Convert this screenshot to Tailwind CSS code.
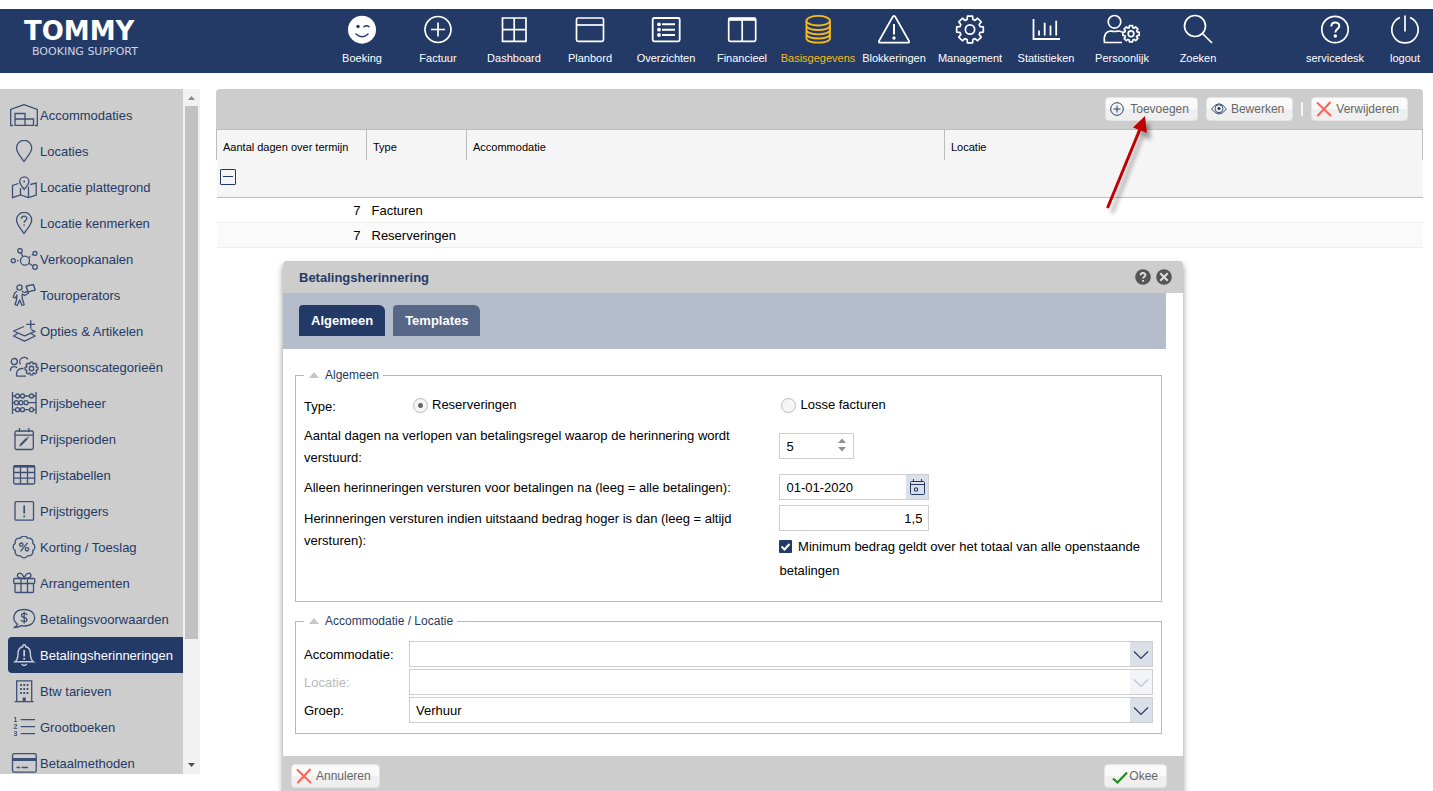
<!DOCTYPE html>
<html lang="nl">
<head>
    <meta charset="UTF-8">
    <meta name="viewport" content="width=device-width, initial-scale=1">
    <title>Tommy Booking Support - Betalingsherinneringen</title>
    <script src="https://cdn.jsdelivr.net/npm/@tailwindcss/browser@4"></script>
</head>
<body class="relative flex h-screen flex-col overflow-hidden bg-white pt-[9px] font-['Liberation_Sans',Arial,sans-serif] text-[13px] text-black">

    <!-- Shared shapes -->
    <svg class="hidden" aria-hidden="true">
        <symbol id="gear" viewBox="-16 -16 32 32">
            <path vector-effect="non-scaling-stroke" stroke-linejoin="round" d="M-2.67-13.74H2.67L2.98-10.38L5.23-9.45L7.83-11.6L11.6-7.83L9.45-5.23L10.38-2.98L13.74-2.67V2.67L10.38 2.98L9.45 5.23L11.6 7.83L7.83 11.6L5.23 9.45L2.98 10.38L2.67 13.74H-2.67L-2.98 10.38L-5.23 9.45L-7.83 11.6L-11.6 7.83L-9.45 5.23L-10.38 2.98L-13.74 2.67V-2.67L-10.38-2.98L-9.45-5.23L-11.6-7.83L-7.83-11.6L-5.23-9.45L-2.98-10.38Z"/>
            <circle vector-effect="non-scaling-stroke" r="4.8"/>
        </symbol>
        <symbol id="cross" viewBox="0 0 16 16">
            <path d="M1.5 2L14.5 14.5M14 1.5L2 14.5" fill="none" stroke="#ff6257" stroke-width="2" stroke-linecap="round"/>
        </symbol>
        <symbol id="chevron" viewBox="0 0 16 10">
            <path d="M1 1.5L8 8.5L15 1.5" fill="none" stroke="currentColor" stroke-width="1.2"/>
        </symbol>
    </svg>

    <!-- Top bar -->
    <header class="flex h-16 shrink-0 bg-[#243a66] text-[11px] text-white">
        <a href="#" class="flex w-[324px] shrink-0 flex-col pt-2 pl-6 font-['DejaVu_Sans',sans-serif]">
            <span class="text-[26px] leading-7 font-bold">TOMMY</span>
            <span class="pl-2 text-[11px] leading-[14px] text-[#cfd6e4]">BOOKING SUPPORT</span>
        </a>
        <nav class="flex">
            <a href="#" class="flex w-[76px] flex-col items-center gap-1 pt-[5px]">
                <svg class="size-8" viewBox="0 0 32 32"><circle cx="16" cy="15.7" r="14" fill="#fff"/><circle cx="12" cy="12.5" r="1.7" fill="#243a66"/><path d="M18 12.7q2.7-2 5 0M10 20q6.200 5.500 12 0" fill="none" stroke="#243a66" stroke-width="1.500" stroke-linecap="round"/></svg>
                <span class="leading-4">Boeking</span>
            </a>
            <a href="#" class="flex w-[76px] flex-col items-center gap-1 pt-[5px]">
                <svg class="size-8" viewBox="0 0 32 32" fill="none" stroke="#fff" stroke-width="1.700"><circle cx="16" cy="15.500" r="13"/><path d="M16 8.500v14M9 15.500h14"/></svg>
                <span class="leading-4">Factuur</span>
            </a>
            <a href="#" class="flex w-[76px] flex-col items-center gap-1 pt-[5px]">
                <svg class="size-8" viewBox="0 0 32 32" fill="none" stroke="#fff" stroke-width="1.700"><path d="M4.500 4h23.500v23.300H4.500zM16.200 4v23.300M4.500 15.700h23.500"/></svg>
                <span class="leading-4">Dashboard</span>
            </a>
            <a href="#" class="flex w-[76px] flex-col items-center gap-1 pt-[5px]">
                <svg class="size-8" viewBox="0 0 32 32" fill="none" stroke="#fff" stroke-width="1.700"><rect x="2.500" y="4" width="27" height="23.300" rx="1.500"/><path d="M2.500 11h27"/></svg>
                <span class="leading-4">Planbord</span>
            </a>
            <a href="#" class="flex w-[76px] flex-col items-center gap-1 pt-[5px]">
                <svg class="size-8" viewBox="0 0 32 32" fill="none" stroke="#fff" stroke-width="1.800"><rect x="2.700" y="4" width="27" height="23.300" rx="1.500"/><path d="M12 10.300h13M12 15.700h13M12 21h13" stroke-width="2"/><g fill="#fff" stroke="none"><circle cx="9" cy="10.300" r="1.900"/><circle cx="9" cy="15.700" r="1.900"/><circle cx="9" cy="21" r="1.900"/></g></svg>
                <span class="leading-4">Overzichten</span>
            </a>
            <a href="#" class="flex w-[76px] flex-col items-center gap-1 pt-[5px]">
                <svg class="size-8" viewBox="0 0 32 32" fill="none" stroke="#fff" stroke-width="1.700"><rect x="2.700" y="4" width="27" height="23.300" rx="1.500"/><path d="M2.700 5.300h27" stroke-width="3"/><path d="M16.200 5v22"/></svg>
                <span class="leading-4">Financieel</span>
            </a>
            <a href="#" aria-current="page" class="flex w-[76px] flex-col items-center gap-1 pt-[5px] text-[#f9b916]">
                <svg class="size-8" viewBox="0 0 32 32" fill="none" stroke="currentColor" stroke-width="1.800"><ellipse cx="16.200" cy="6.700" rx="11.800" ry="4.800"/><path d="M4.400 6.700v17.500c0 6 23.600 6 23.600 0V6.700M4.400 11.500c0 6 23.600 6 23.600 0M4.400 15.800c0 6 23.600 6 23.600 0M4.400 20c0 6 23.600 6 23.600 0"/></svg>
                <span class="leading-4">Basisgegevens</span>
            </a>
            <a href="#" class="flex w-[76px] flex-col items-center gap-1 pt-[5px]">
                <svg class="size-8" viewBox="0 0 32 32" fill="none" stroke="#fff" stroke-width="1.700" stroke-linejoin="round"><path d="M14.900 2.500q1.100-1.200 2.200 0L31 27q.5 1.700-1 1.700H2q-1.500 0-1-1.700z"/><path d="M16 10v10.500" stroke-width="2"/><circle cx="16" cy="24" r=".8" fill="#fff"/></svg>
                <span class="leading-4">Blokkeringen</span>
            </a>
            <a href="#" class="flex w-[76px] flex-col items-center gap-1 pt-[5px]">
                <svg class="size-8" viewBox="0 0 32 32" fill="none" stroke="#fff" stroke-width="1.700"><use href="#gear" x="0.500" y="0" width="31" height="31"/></svg>
                <span class="leading-4">Management</span>
            </a>
            <a href="#" class="flex w-[76px] flex-col items-center gap-1 pt-[5px]">
                <svg class="size-8" viewBox="0 0 32 32" fill="none" stroke="#fff" stroke-width="1.800"><path d="M3.500 5v20h26.500M9 16.500v5M14.700 8.700v12.800M20.500 11.500v10M26.200 6.700v14.800"/></svg>
                <span class="leading-4">Statistieken</span>
            </a>
            <a href="#" class="flex w-[76px] flex-col items-center gap-1 pt-[5px]">
                <svg class="size-8 overflow-visible" viewBox="0 0 32 32" fill="none" stroke="#fff" stroke-width="1.700"><circle cx="8.500" cy="7.800" r="6.300"/><path d="M16 28.500H-1.500q-1.500-11 6.500-11.500 3.500 1 7 0 2.500 0 4 1.200"/><use href="#gear" x="15.500" y="10.300" width="19" height="19"/></svg>
                <span class="leading-4">Persoonlijk</span>
            </a>
            <a href="#" class="flex w-[76px] flex-col items-center gap-1 pt-[5px]">
                <svg class="size-8" viewBox="0 0 32 32" fill="none" stroke="#fff" stroke-width="1.700"><circle cx="13" cy="12" r="10.500"/><path d="M20.500 19.500L30 29"/></svg>
                <span class="leading-4">Zoeken</span>
            </a>
        </nav>
        <div class="ml-auto flex pr-1">
            <a href="#" class="flex w-[92px] flex-col items-center gap-1 pt-[5px]">
                <svg class="size-8" viewBox="0 0 32 32" fill="none" stroke="#fff" stroke-width="1.700"><circle cx="16" cy="15.500" r="13.200"/><path d="M12.300 12.500c0-5.500 8-5.300 8-.5 0 3-4 3.200-4 6.500" stroke-width="2"/><circle cx="16.300" cy="22" r=".9" fill="#fff"/></svg>
                <span class="leading-4">servicedesk</span>
            </a>
            <a href="#" class="flex w-12 flex-col items-center gap-1 pt-[5px]">
                <svg class="size-8" viewBox="0 0 32 32" fill="none" stroke="#fff" stroke-width="1.700"><path d="M11 3.500a13.200 13.200 0 1 0 10 0M16 1.500v16"/></svg>
                <span class="leading-4">logout</span>
            </a>
        </div>
    </header>

    <div class="flex min-h-0 flex-1 pt-4">
        <!-- Side menu -->
        <aside class="mb-[17px] flex w-[200px] shrink-0 overflow-hidden">
            <nav class="min-w-0 flex-1 overflow-hidden bg-[#cdcdcd] pt-2 pl-2 whitespace-nowrap text-[#243a66]">
                <a href="#" class="flex h-9 items-center rounded-l pt-0.5">
                    <svg class="h-6 w-8 shrink-0 opacity-85" viewBox="0 0 32 24" fill="none" stroke="currentColor" stroke-width="1.300"><path d="M5 21.500H2.700V5.500L16 .6l13.300 4.900v16H27M7 9.500h10V15h8.500v6.300H7zM7 15h10v6.300"/></svg>
                    Accommodaties
                </a>
                <a href="#" class="flex h-9 items-center rounded-l pt-0.5">
                    <svg class="h-6 w-8 shrink-0 opacity-85" viewBox="0 0 32 24" fill="none" stroke="currentColor" stroke-width="1.300"><path d="M16 21.500C13 17 8.500 12.500 8.500 8a7.600 7.600 0 0 1 15.200 0c0 4.500-4.700 9-7.700 13.500z"/></svg>
                    Locaties
                </a>
                <a href="#" class="flex h-9 items-center rounded-l pt-0.5">
                    <svg class="h-6 w-8 shrink-0 opacity-85" viewBox="0 0 32 24" fill="none" stroke="currentColor" stroke-width="1.300"><path d="M10.500 7.500l-6 2v12l8-2.500 8 2.500 7.700-2.500V7l-6 1.500M12.500 12v7M20.500 10.500v11"/><path d="M16.200 13.500c-1.500-2.500-4.500-4.500-4.500-8a4.600 4.600 0 0 1 9.200 0c0 3.500-3 5.500-4.700 8z"/><circle cx="16.200" cy="5.500" r=".9" fill="currentColor" stroke="none"/></svg>
                    Locatie plattegrond
                </a>
                <a href="#" class="flex h-9 items-center rounded-l pt-0.5">
                    <svg class="h-6 w-8 shrink-0 opacity-85" viewBox="0 0 32 24" fill="none" stroke="currentColor" stroke-width="1.300"><path d="M16 21.500C13 17 8.500 12.500 8.500 8a7.600 7.600 0 0 1 15.200 0c0 4.500-4.700 9-7.700 13.500zM13.500 6.800c0-3.500 5.300-3.300 5.300-.3 0 2-2.700 2-2.700 4.300M16.100 12.200v1.500"/></svg>
                    Locatie kenmerken
                </a>
                <a href="#" class="flex h-9 items-center rounded-l pt-0.5">
                    <svg class="h-6 w-8 shrink-0 opacity-85" viewBox="0 0 32 24" fill="none" stroke="currentColor" stroke-width="1.300"><circle cx="12" cy="2.800" r="2.200"/><circle cx="27" cy="5.500" r="2"/><circle cx="5.300" cy="12.700" r="2"/><circle cx="17" cy="12.700" r="4.500"/><circle cx="27" cy="19" r="2.300"/><path d="M13 5l2 3.500M21 9.500l1.300-1M23.700 7.300l1.300-.8M9 12.700h1.500M20.800 15.200l4 2.500"/></svg>
                    Verkoopkanalen
                </a>
                <a href="#" class="flex h-9 items-center rounded-l pt-0.5">
                    <svg class="h-6 w-8 shrink-0 opacity-85" viewBox="0 0 32 24" fill="none" stroke="currentColor" stroke-width="1.300" stroke-linejoin="round"><circle cx="11.500" cy="3.500" r="2.600"/><path d="M9 7.300c-2.500 1-3.500 3.500-3.700 6l1.900.7 1.800-3-.5 5-1.500 4.500 2.200 1 2.500-5.500 2.300 5.500 2.200-.8-2-6.200V10l2.500 1.500 4-2.500-1-1.800-3 1.500-3-1.700M20.300 8.800L18 2.500M18.200 2l7.300-1.500 1.700 5.700-7.300 1.600z"/></svg>
                    Touroperators
                </a>
                <a href="#" class="flex h-9 items-center rounded-l pt-0.5">
                    <svg class="h-6 w-8 shrink-0 opacity-85" viewBox="0 0 32 24" fill="none" stroke="currentColor" stroke-width="1.300" stroke-linejoin="round"><path d="M16 6.500L5.500 11l11 4.800 10.500-4.500-4-1.800M9.500 13.500l-4 2.500 11 5.200L27.200 16l-4-2.500M22.700.2v8.500M18.300 4.300H27"/></svg>
                    Opties &amp; Artikelen
                </a>
                <a href="#" class="flex h-9 items-center rounded-l pt-0.5">
                    <svg class="h-6 w-8 shrink-0 opacity-85" viewBox="0 0 32 24" fill="none" stroke="currentColor" stroke-width="1.300"><circle cx="6.300" cy="5.500" r="3"/><path d="M2.500 15v-1.500q.5-3 4-2.800 1.500 0 2.500 1M12.500 8.300a4.400 4.400 0 1 1 7.500-5M8.500 20.200q-.5-7.500 5-7.700h2M8.500 20.200H18"/><use href="#gear" x="16" y="5" width="15" height="15"/></svg>
                    Persoonscategorieën
                </a>
                <a href="#" class="flex h-9 items-center rounded-l pt-0.5">
                    <svg class="h-6 w-8 shrink-0 opacity-85" viewBox="0 0 32 24" fill="none" stroke="currentColor" stroke-width="1.300"><path d="M4.500 0v22M28 0v22M4.500 4h3M16.500 4h5M4.500 10.700h2M20 10.700h8M4.500 17.700h3M16.500 17.700h5M25.500 4H28M25.500 17.700H28"/><circle cx="9.500" cy="4" r="2"/><circle cx="14.500" cy="4" r="2"/><circle cx="23.500" cy="4" r="2"/><circle cx="8.500" cy="10.700" r="2"/><circle cx="13" cy="10.700" r="2"/><circle cx="18" cy="10.700" r="2"/><circle cx="9.500" cy="17.700" r="2"/><circle cx="14.500" cy="17.700" r="2"/><circle cx="23.500" cy="17.700" r="2"/></svg>
                    Prijsbeheer
                </a>
                <a href="#" class="flex h-9 items-center rounded-l pt-0.5">
                    <svg class="h-6 w-8 shrink-0 opacity-85" viewBox="0 0 32 24" fill="none" stroke="currentColor" stroke-width="1.300"><rect x="7" y="3" width="18.300" height="18.500" rx="1.500"/><path d="M7 7.200h18.300M11.500 0v4M20.800 0v4"/><path d="M12.500 17l6.500-6.500" stroke-width="2.200"/><path d="M19.500 10l1-1M11.500 18.300l1-1"/></svg>
                    Prijsperioden
                </a>
                <a href="#" class="flex h-9 items-center rounded-l pt-0.5">
                    <svg class="h-6 w-8 shrink-0 opacity-85" viewBox="0 0 32 24" fill="none" stroke="currentColor" stroke-width="1.300"><rect x="5.700" y="1.700" width="21" height="18.300" rx="1.500"/><path d="M5.700 2.500h21" stroke-width="2.200"/><path d="M5.700 8.500h21M5.700 14.200h21M12.500 3v17M19.500 3v17"/></svg>
                    Prijstabellen
                </a>
                <a href="#" class="flex h-9 items-center rounded-l pt-0.5">
                    <svg class="h-6 w-8 shrink-0 opacity-85" viewBox="0 0 32 24" fill="none" stroke="currentColor" stroke-width="1.300"><rect x="7" y="1.700" width="18.500" height="18.500" rx="1"/><path d="M16.200 5.500v8M16.200 15.500v1.700" stroke-width="1.700"/></svg>
                    Prijstriggers
                </a>
                <a href="#" class="flex h-9 items-center rounded-l pt-0.5">
                    <svg class="h-6 w-8 shrink-0 opacity-85" viewBox="0 0 32 24" fill="none" stroke="currentColor" stroke-width="1.300"><path d="M12.360 2.220A4.200 4.200 0 0 1 19.640 2.220A4.200 4.200 0 0 1 24.780 7.360A4.200 4.200 0 0 1 24.780 14.640A4.200 4.200 0 0 1 19.640 19.780A4.200 4.200 0 0 1 12.360 19.780A4.200 4.200 0 0 1 7.220 14.640A4.200 4.200 0 0 1 7.220 7.360A4.200 4.200 0 0 1 12.360 2.220z"/><path d="M19.500 6.800l-7 8.500"/><circle cx="13.300" cy="8.700" r="1.700"/><circle cx="19" cy="13.300" r="1.700"/></svg>
                    Korting / Toeslag
                </a>
                <a href="#" class="flex h-9 items-center rounded-l pt-0.5">
                    <svg class="h-6 w-8 shrink-0 opacity-85" viewBox="0 0 32 24" fill="none" stroke="currentColor" stroke-width="1.300"><rect x="5.700" y="6.500" width="21" height="5" rx="1"/><path d="M7 11.500v8q0 1 1 1h16.500q1 0 1-1v-8M13 6.500v14M19.500 6.500v14M15.500 6.500C10 6.500 8.500 4 10 1.800c2-2 5 .5 6.200 4.500 1.200-4 4.200-6.500 6.200-4.500 1.500 2.200 0 4.700-5.500 4.700"/></svg>
                    Arrangementen
                </a>
                <a href="#" class="flex h-9 items-center rounded-l pt-0.5">
                    <svg class="h-6 w-8 shrink-0 opacity-85" viewBox="0 0 32 24" fill="none" stroke="currentColor" stroke-width="1.300"><path d="M9.500 16.200C3.500 12 4.500 1.500 16.200 1.500c14 0 14 16.500 0 16.500q-1.700 0-3-.4-3 2-7.500 1.900 3-1 3.800-3.300zM19.200 7q-.7-1.600-3-1.600c-3.600 0-3.600 3.700 0 4.200s3.600 4.100 0 4.100q-2.500 0-3.200-1.700M16.200 3.800v11.700"/></svg>
                    Betalingsvoorwaarden
                </a>
                <a href="#" aria-current="page" class="flex h-9 items-center rounded-l bg-[#243a66] pt-0.5 text-white">
                    <svg class="h-6 w-8 shrink-0 overflow-visible opacity-75" viewBox="0 0 32 24" fill="none" stroke="currentColor" stroke-width="1.400"><path d="M7 17.700c3-2.200 3-4.500 3-7.700 0-4 2-6.700 4.700-7.200v-.6q0-1.500 1.500-1.500t1.500 1.500v.6c2.700.5 4.700 3.200 4.700 7.200 0 3.200 0 5.500 3 7.700zM13.700 20q2.500 3 5 0"/><path d="M16.200 6v6.500M16.200 14v1.700" stroke-width="1.800"/></svg>
                    Betalingsherinneringen
                </a>
                <a href="#" class="flex h-9 items-center rounded-l pt-0.5">
                    <svg class="h-6 w-8 shrink-0 opacity-85" viewBox="0 0 32 24" fill="none" stroke="currentColor" stroke-width="1.300"><path d="M8.700 21.500V.8h15v20.700M6.700 21.700h19"/><path d="M13 4v10.500M16.200 4v10.500M19.500 4v10.500" stroke-width="1.800" stroke-dasharray="2 2"/><path d="M16.200 17.500v4" stroke-width="3"/></svg>
                    Btw tarieven
                </a>
                <a href="#" class="flex h-9 items-center rounded-l pt-0.5">
                    <svg class="h-6 w-8 shrink-0 opacity-85" viewBox="0 0 32 24" fill="currentColor" stroke="none"><path d="M12.700 3.700h14.300M12.700 10.700h14.300M12.700 17.700h14.300" stroke="currentColor" stroke-width="1.300"/><g font-size="7" font-weight="bold" text-anchor="middle"><text x="7.500" y="6">1</text><text x="7.500" y="13">2</text><text x="7.500" y="20">3</text></g></svg>
                    Grootboeken
                </a>
                <a href="#" class="flex h-9 items-center rounded-l pt-0.5">
                    <svg class="h-6 w-8 shrink-0 opacity-85" viewBox="0 0 32 24" fill="none" stroke="currentColor" stroke-width="1.300"><rect x="4.500" y="1.700" width="23.700" height="18.500" rx="1.500"/><path d="M4.500 7.500h23.700" stroke-width="3"/><path d="M8.500 15.500h3.500M13.500 15.500h6.500"/></svg>
                    Betaalmethoden
                </a>
            </nav>
            <!-- Scroll bar -->
            <div class="flex w-[17px] flex-col items-center bg-[#f1f1f1]" aria-hidden="true">
                <svg class="h-[17px] w-[17px] shrink-0" viewBox="0 0 17 17"><path d="M5 11l3.500-4 3.500 4z" fill="#8a8a8a"/></svg>
                <div class="w-[13px] grow-[533] bg-[#c1c1c1]"></div>
                <div class="grow-[118]"></div>
                <svg class="h-[17px] w-[17px] shrink-0" viewBox="0 0 17 17"><path d="M5 6l3.500 4L12 6z" fill="#505050"/></svg>
            </div>
        </aside>

        <!-- Overview -->
        <main class="relative min-w-0 flex-1 pr-[10px] pl-4">
            <div class="flex h-10 items-center justify-end gap-2 rounded-t bg-[#cdcdcd] pr-[15px] text-[12px] text-[#666]">
                <button type="button" class="flex h-6 items-center gap-1 rounded-sm border border-[#e4e4e4] bg-linear-to-b from-[#fafafa] from-50% to-[#efefef] to-50% pr-2 pl-1">
                    <svg class="size-4" viewBox="0 0 16 16" fill="none" stroke="#243a66"><circle cx="7" cy="8" r="6.300"/><path d="M7 4.500v7M3.500 8h7"/></svg>
                    Toevoegen
                </button>
                <button type="button" class="flex h-6 items-center gap-1 rounded-sm border border-[#e4e4e4] bg-linear-to-b from-[#fafafa] from-50% to-[#efefef] to-50% pr-2 pl-1">
                    <svg class="size-4" viewBox="0 0 16 16" fill="none" stroke="#3a4c70"><path d="M.6 8Q8-2.500 15.400 8 8 18 .6 8z"/><circle cx="8" cy="7.700" r="4"/><circle cx="8" cy="7.500" r="1.200" fill="#243a66"/></svg>
                    Bewerken
                </button>
                <span class="h-[14px] w-0.5 bg-[#f5f5f5]"></span>
                <button type="button" class="flex h-6 items-center gap-1 rounded-sm border border-[#e4e4e4] bg-linear-to-b from-[#fafafa] from-50% to-[#efefef] to-50% pr-2 pl-1">
                    <svg class="size-4"><use href="#cross"/></svg>
                    Verwijderen
                </button>
            </div>
            <table class="w-full table-fixed border-collapse">
                <colgroup><col class="w-[150px]"><col class="w-[100px]"><col><col></colgroup>
                <thead class="border-t border-b border-[#bdbdbd] bg-[#f5f5f5] text-left text-[11px]">
                    <tr class="h-[30px]">
                        <th class="border-x border-[#bdbdbd] px-1.5 pt-1 font-normal">Aantal dagen over termijn</th>
                        <th class="border-x border-[#bdbdbd] px-1.5 pt-1 font-normal">Type</th>
                        <th class="border-x border-[#bdbdbd] px-1.5 pt-1 font-normal">Accommodatie</th>
                        <th class="border-x border-[#bdbdbd] px-1.5 pt-1 font-normal">Locatie</th>
                    </tr>
                    <tr class="h-[38px]">
                        <td colspan="4" class="pl-[3px] align-top">
                            <button type="button" aria-label="Groep inklappen" class="mt-[9px] flex size-4 items-center justify-center rounded-[1px] border border-[#243a66]">
                                <span class="h-px w-2.5 bg-[#243a66]"></span>
                            </button>
                        </td>
                    </tr>
                </thead>
                <tbody>
                    <tr class="h-[25px] border-b border-[#ededed]">
                        <td class="pt-0.5 pr-1.5 text-right">7</td>
                        <td class="pt-0.5 pl-[5px]" colspan="3">Facturen</td>
                    </tr>
                    <tr class="h-[25px] border-b border-[#ededed] bg-[#fafafa]">
                        <td class="pt-0.5 pr-1.5 text-right">7</td>
                        <td class="pt-0.5 pl-[5px]" colspan="3">Reserveringen</td>
                    </tr>
                </tbody>
            </table>

            <!-- Pointer to the add button -->
            <svg class="pointer-events-none absolute top-5 right-[273px] h-[110px] w-[60px] overflow-visible" viewBox="0 0 60 110" aria-hidden="true">
                <g class="blur-[2px]" fill="#000" stroke="#000" opacity=".35"><path d="M12 104L44 22" stroke-width="3"/><path d="M49 12L37 25l14 6z" stroke="none"/></g>
                <path d="M7.500 99L40 20" stroke="#c00000" stroke-width="3"/>
                <path d="M45 7L33 18.500l14 5.500z" fill="#c00000"/>
            </svg>
        </main>
    </div>

    <!-- Dialog -->
    <form role="dialog" aria-labelledby="dialogTitle" class="absolute top-[261px] right-[250px] left-[283px] rounded-t bg-white shadow-[0_4px_6px_rgba(0,0,0,0.45)]">
        <div class="flex h-8 items-center gap-[5px] rounded-t bg-[#cdcdcd] pr-[11px] pl-4">
            <h2 id="dialogTitle" class="flex-1 pt-0.5 font-bold text-[#243a66]">Betalingsherinnering</h2>
            <button type="button" aria-label="Help">
                <svg class="size-4" viewBox="0 0 16 16"><circle cx="8" cy="8" r="7.800" fill="#555"/><path d="M5.700 6.300c0-3 4.700-3 4.700-.2 0 1.700-2.300 1.700-2.300 3.500M8.100 11v1.800" fill="none" stroke="#e0e0e0" stroke-width="1.900"/></svg>
            </button>
            <button type="button" aria-label="Sluiten">
                <svg class="size-4" viewBox="0 0 16 16"><circle cx="8" cy="8" r="7.800" fill="#555"/><path d="M4.300 4.300l7.400 7.400M11.700 4.300l-7.400 7.400" stroke="#e0e0e0" stroke-width="2"/></svg>
            </button>
        </div>

        <div role="tablist" class="mr-[17px] flex h-14 items-start gap-2 bg-[#b5bccc] pt-3 pl-4 font-bold text-white">
            <button type="button" role="tab" aria-selected="true" class="h-[31px] rounded-tl-sm rounded-tr-md bg-[#243a66] px-3">Algemeen</button>
            <button type="button" role="tab" aria-selected="false" class="h-[31px] rounded-tl-sm rounded-tr-md bg-[#556687] px-3">Templates</button>
        </div>

        <fieldset class="mt-[17px] mr-[21px] ml-3 border border-[#b5b5c3] px-2 pt-2.5 pb-[18px]">
            <legend class="flex items-center gap-1.5 pr-1 pl-[5px] text-[12px] leading-[18px] text-[#243a66]">
                <svg class="h-1.5 w-2.5" viewBox="0 0 10 6"><path d="M0 6l5-6 5 6z" fill="#c6c6c6"/></svg>
                Algemeen
            </legend>
            <div class="grid grid-cols-[14fr_11fr] items-start leading-[22px]">
                <div class="flex items-start">
                    <span class="w-[109px] pt-0.5">Type:</span>
                    <label class="flex items-center gap-1">
                        <input type="radio" name="type" checked class="size-[15px] appearance-none rounded-full border border-[#bbb] bg-[#f6f6f6] bg-[radial-gradient(circle,#666_0_2px,transparent_3px)]">
                        Reserveringen
                    </label>
                </div>
                <label class="flex items-center gap-1 pl-0.5">
                    <input type="radio" name="type" class="size-[15px] appearance-none rounded-full border border-[#bbb] bg-[#f6f6f6]">
                    Losse facturen
                </label>
            </div>
            <div class="mt-[7px] grid grid-cols-[14fr_11fr] leading-[22px]">
                <label for="days" class="pr-10">Aantal dagen na verlopen van betalingsregel waarop de herinnering wordt verstuurd:</label>
                <div class="relative mt-2 h-[26px] w-[75px]">
                    <input id="days" type="text" inputmode="numeric" value="5" class="h-full w-full border border-[#cdcdcd] px-1.5">
                    <svg class="pointer-events-none absolute top-[5px] right-[7px] h-[14px] w-[10px]" viewBox="0 0 10 14"><path d="M1 5l4-4.500L9 5zM1 9l4 4.500L9 9z" fill="#919191"/></svg>
                </div>
            </div>
            <div class="mt-[5px] grid grid-cols-[14fr_11fr] items-center leading-[22px]">
                <label for="after" class="pt-0.5">Alleen herinneringen versturen voor betalingen na (leeg = alle betalingen):</label>
                <div class="flex h-[26px] w-[150px] border border-[#cdcdcd]">
                    <input id="after" type="text" value="01-01-2020" class="min-w-0 flex-1 px-1.5 pt-0.5">
                    <button type="button" aria-label="Kies datum" class="flex w-[22px] items-center justify-center bg-[#dbdfe7]">
                        <svg class="size-[17px]" viewBox="0 0 17 17" fill="none" stroke="#243a66"><rect x="1.500" y="2.500" width="14" height="13" rx="1"/><path d="M1.500 5.500h14M4.500 0v3M12.500 0v3M5.500 9h3v3h-3z"/></svg>
                    </button>
                </div>
            </div>
            <div class="mt-[5px] grid grid-cols-[14fr_11fr] leading-[22px]">
                <label for="amount" class="pt-[3px] pr-10">Herinneringen versturen indien uitstaand bedrag hoger is dan (leeg = altijd versturen):</label>
                <div>
                    <input id="amount" type="text" value="1,5" class="block h-[26px] w-[150px] border border-[#cdcdcd] px-1.5 text-right">
                    <label class="mt-1 block leading-6">
                        <input type="checkbox" checked class="sr-only">
                        <svg class="mr-0.5 inline-block size-[13px] align-[-2px]" viewBox="0 0 13 13"><rect width="13" height="13" rx="1" fill="#243a66"/><path d="M2.500 6.500l3 3L10.500 4" fill="none" stroke="#fff" stroke-width="2"/></svg>
                        Minimum bedrag geldt over het totaal van alle openstaande betalingen
                    </label>
                </div>
            </div>
        </fieldset>

        <fieldset class="mt-2.5 mr-[21px] ml-3 border border-[#b5b5c3] px-2 pt-[11px] pb-2.5">
            <legend class="flex items-center gap-1.5 pr-1 pl-[5px] text-[12px] leading-[18px] text-[#243a66]">
                <svg class="h-1.5 w-2.5" viewBox="0 0 10 6"><path d="M0 6l5-6 5 6z" fill="#c6c6c6"/></svg>
                Accommodatie / Locatie
            </legend>
            <div class="flex flex-col gap-0.5">
                <div class="flex h-[26px] items-center">
                    <label for="accommodation" class="w-[105px] pt-0.5">Accommodatie:</label>
                    <div class="relative h-full flex-1">
                        <select id="accommodation" class="h-full w-full appearance-none border border-[#cdcdcd] px-1.5 pt-0.5"><option></option></select>
                        <span class="pointer-events-none absolute inset-y-px right-px flex w-[22px] items-center justify-center bg-[#dbdfe7] pt-0.5 text-[#243a66]"><svg class="h-2.5 w-4"><use href="#chevron"/></svg></span>
                    </div>
                </div>
                <div class="flex h-[26px] items-center">
                    <label for="location" class="w-[105px] pt-0.5 text-[#b9b9b9]">Locatie:</label>
                    <div class="relative h-full flex-1">
                        <select id="location" disabled class="h-full w-full appearance-none border border-[#cdcdcd] px-1.5 pt-0.5"><option></option></select>
                        <span class="pointer-events-none absolute inset-y-px right-px flex w-[22px] items-center justify-center bg-[#f3f4f8] pt-0.5 text-[#bdc2d0]"><svg class="h-2.5 w-4"><use href="#chevron"/></svg></span>
                    </div>
                </div>
                <div class="flex h-[26px] items-center">
                    <label for="group" class="w-[105px] pt-0.5">Groep:</label>
                    <div class="relative h-full flex-1">
                        <select id="group" class="h-full w-full appearance-none border border-[#cdcdcd] px-1.5 pt-0.5"><option>Verhuur</option></select>
                        <span class="pointer-events-none absolute inset-y-px right-px flex w-[22px] items-center justify-center bg-[#dbdfe7] pt-0.5 text-[#243a66]"><svg class="h-2.5 w-4"><use href="#chevron"/></svg></span>
                    </div>
                </div>
            </div>
        </fieldset>

        <div class="mt-[22px] flex h-10 items-center justify-between bg-[#cdcdcd] pr-4 pl-2 text-[12px] text-[#666]">
            <button type="button" class="flex h-6 items-center gap-1 rounded-sm border border-[#e4e4e4] bg-linear-to-b from-[#fafafa] from-50% to-[#efefef] to-50% pr-2 pl-1">
                <svg class="size-4"><use href="#cross"/></svg>
                Annuleren
            </button>
            <button type="submit" class="flex h-6 items-center gap-px rounded-sm border border-[#e4e4e4] bg-linear-to-b from-[#fafafa] from-50% to-[#efefef] to-50% pr-2 pl-[7px]">
                <svg class="size-4" viewBox="0 0 16 16"><path d="M1 10.500l4.500 4L15 4.500" fill="none" stroke="#1e8c1e" stroke-width="2.200"/></svg>
                Okee
            </button>
        </div>
    </form>
</body>
</html>
